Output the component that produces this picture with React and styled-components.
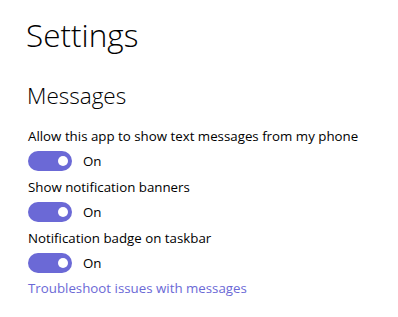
import React, { useState } from 'react';
import styled, { createGlobalStyle } from 'styled-components';

const GlobalStyle = createGlobalStyle`
  html, body {
    margin: 0;
    padding: 0;
    background: #ffffff;
  }
  body {
    font-family: "Open Sans", "Noto Sans", sans-serif;
    color: #000000;
  }
`;

const Page = styled.div`
  padding: 13px 20px 0 28px;
  display: flex;
  flex-direction: column;
  align-items: flex-start;
`;

const Title = styled.h1`
  margin: 0 0 0 -2px;
  font-size: 31.5px;
  font-weight: 300;
  line-height: 43px;
`;

const SectionTitle = styled.h2`
  margin: 24px 0 0 -1px;
  font-size: 22.5px;
  font-weight: 300;
  line-height: 31px;
`;

const Setting = styled.div`
  display: flex;
  flex-direction: column;
  margin-top: ${(p) => (p.$first ? '15px' : '6px')};
`;

const Label = styled.div`
  font-size: 13.3px;
  line-height: 20px;
  white-space: nowrap;
`;

const ToggleRow = styled.label`
  display: flex;
  align-items: center;
  gap: 11px;
  margin-top: 5px;
  height: 20px;
  font-size: 13.3px;
  line-height: 20px;
  cursor: pointer;
`;

const Track = styled.span`
  position: relative;
  width: 44px;
  height: 20px;
  border-radius: 10px;
  background: ${(p) => (p.$on ? '#6b69d6' : '#ffffff')};
  border: ${(p) => (p.$on ? 'none' : '2px solid #000000')};
  box-sizing: border-box;
  flex-shrink: 0;
`;

const Knob = styled.span`
  position: absolute;
  top: 5px;
  left: ${(p) => (p.$on ? '30px' : '4px')};
  width: 10px;
  height: 10px;
  border-radius: 50%;
  background: ${(p) => (p.$on ? '#ffffff' : '#000000')};
`;

const Link = styled.a`
  margin-top: 5px;
  font-size: 13.3px;
  line-height: 20px;
  color: #6b69d6;
  text-decoration: none;
  cursor: pointer;
`;

function Toggle({ label, first }) {
  const [on, setOn] = useState(true);
  return (
    <Setting $first={first}>
      <Label>{label}</Label>
      <ToggleRow onClick={() => setOn(!on)}>
        <Track $on={on}>
          <Knob $on={on} />
        </Track>
        <span>{on ? 'On' : 'Off'}</span>
      </ToggleRow>
    </Setting>
  );
}

export default function App() {
  return (
    <>
      <GlobalStyle />
      <Page>
        <Title>Settings</Title>
        <SectionTitle>Messages</SectionTitle>
        <Toggle first label="Allow this app to show text messages from my phone" />
        <Toggle label="Show notification banners" />
        <Toggle label="Notification badge on taskbar" />
        <Link>Troubleshoot issues with messages</Link>
      </Page>
    </>
  );
}
